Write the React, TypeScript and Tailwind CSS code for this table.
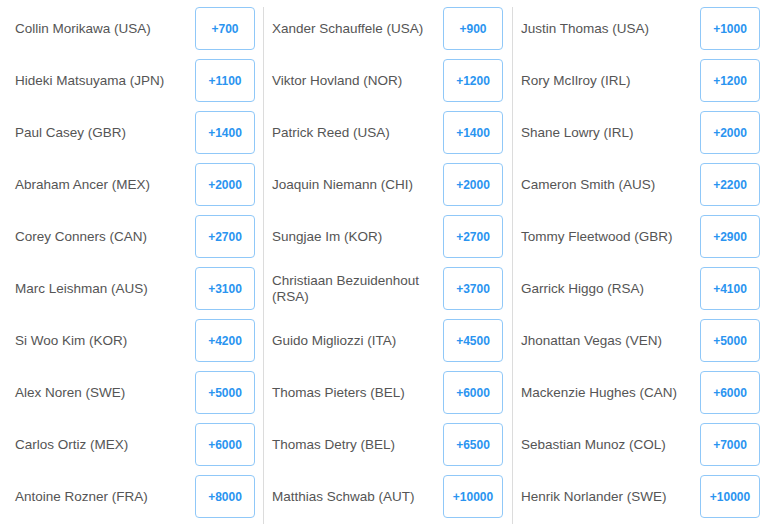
const columns: [string, string][][] = [
  [
    ['Collin Morikawa (USA)', '+700'],
    ['Hideki Matsuyama (JPN)', '+1100'],
    ['Paul Casey (GBR)', '+1400'],
    ['Abraham Ancer (MEX)', '+2000'],
    ['Corey Conners (CAN)', '+2700'],
    ['Marc Leishman (AUS)', '+3100'],
    ['Si Woo Kim (KOR)', '+4200'],
    ['Alex Noren (SWE)', '+5000'],
    ['Carlos Ortiz (MEX)', '+6000'],
    ['Antoine Rozner (FRA)', '+8000'],
  ],
  [
    ['Xander Schauffele (USA)', '+900'],
    ['Viktor Hovland (NOR)', '+1200'],
    ['Patrick Reed (USA)', '+1400'],
    ['Joaquin Niemann (CHI)', '+2000'],
    ['Sungjae Im (KOR)', '+2700'],
    ['Christiaan Bezuidenhout (RSA)', '+3700'],
    ['Guido Migliozzi (ITA)', '+4500'],
    ['Thomas Pieters (BEL)', '+6000'],
    ['Thomas Detry (BEL)', '+6500'],
    ['Matthias Schwab (AUT)', '+10000'],
  ],
  [
    ['Justin Thomas (USA)', '+1000'],
    ['Rory McIlroy (IRL)', '+1200'],
    ['Shane Lowry (IRL)', '+2000'],
    ['Cameron Smith (AUS)', '+2200'],
    ['Tommy Fleetwood (GBR)', '+2900'],
    ['Garrick Higgo (RSA)', '+4100'],
    ['Jhonattan Vegas (VEN)', '+5000'],
    ['Mackenzie Hughes (CAN)', '+6000'],
    ['Sebastian Munoz (COL)', '+7000'],
    ['Henrik Norlander (SWE)', '+10000'],
  ],
]

const colClass = [
  'w-[263px] pl-[15px] pr-[8px]',
  'w-[249px] pl-[8px] pr-[9px] border-l border-[#dcdcdc]',
  'w-[265px] pl-[8px] pr-[17px] border-l border-[#dcdcdc]',
]

function Row({ name, odds }: { name: string; odds: string }) {
  return (
    <div className="flex items-center justify-between h-[43px]">
      <div className="text-[13.5px] leading-[16px] text-[#555] pr-2">{name}</div>
      <button className="shrink-0 w-[60px] h-[43px] rounded-[4px] border border-[#90c8f8] bg-white text-[#2a94f0] text-[12px] font-bold">
        {odds}
      </button>
    </div>
  )
}

export default function App() {
  return (
    <div className="flex h-[524px] w-[777px] bg-white pt-[7px] overflow-hidden" style={{ fontFamily: '"Liberation Sans", Arial, sans-serif' }}>
      {columns.map((col, i) => (
        <div key={i} className={`flex flex-col gap-[9px] h-[517px] ${colClass[i]}`}>
          {col.map(([name, odds]) => (
            <Row key={name} name={name} odds={odds} />
          ))}
        </div>
      ))}
    </div>
  )
}
